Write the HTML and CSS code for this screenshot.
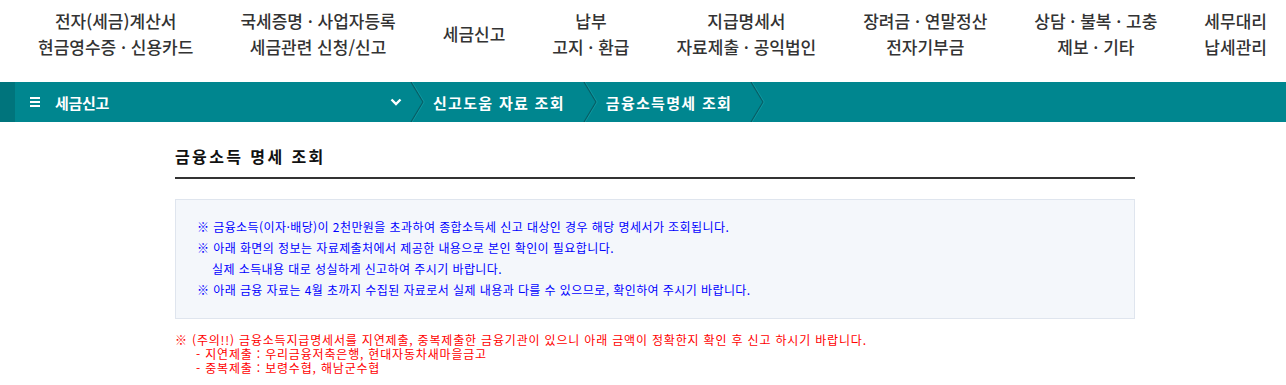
FILE: index.html
```html
<!DOCTYPE html>
<html lang="ko">
<head>
    <meta charset="UTF-8">
    <title>금융소득 명세 조회</title>
    <link rel="stylesheet" href="styles.css">
</head>
<body>

<!-- 상단 메뉴 -->
<ul class="gnb">
    <li><span>전자(세금)계산서</span><span>현금영수증 · 신용카드</span></li>
    <li><span>국세증명 · 사업자등록</span><span>세금관련 신청/신고</span></li>
    <li><span>세금신고</span></li>
    <li><span>납부</span><span>고지 · 환급</span></li>
    <li><span>지급명세서</span><span>자료제출 · 공익법인</span></li>
    <li><span>장려금 · 연말정산</span><span>전자기부금</span></li>
    <li><span>상담 · 불복 · 고충</span><span>제보 · 기타</span></li>
    <li><span>세무대리</span><span>납세관리</span></li>
</ul>

<!-- 경로 -->
<div class="location">
    <div class="loc-side"></div>
    <div class="loc-menu">
        <span class="burger"><i></i><i></i><i></i></span>
        <span class="loc-title">세금신고</span>
        <svg class="arrow-down" width="12" height="8" viewBox="0 0 12 8">
            <polyline points="1.5,1.5 6,6 10.5,1.5" fill="none" stroke="#fff" stroke-width="2.4"/>
        </svg>
    </div>
    <div class="loc-step">신고도움 자료 조회</div>
    <div class="loc-step">금융소득명세 조회</div>
    <div class="loc-step loc-last"></div>
</div>

<!-- 본문 -->
<div class="content">
    <h2 class="page-title">금융소득 명세 조회</h2>

    <div class="info-box">
        <p>※ 금융소득(이자·배당)이 2천만원을 초과하여 종합소득세 신고 대상인 경우 해당 명세서가 조회됩니다.</p>
        <p>※ 아래 화면의 정보는 자료제출처에서 제공한 내용으로 본인 확인이 필요합니다.</p>
        <p class="indent">실제 소득내용 대로 성실하게 신고하여 주시기 바랍니다.</p>
        <p>※ 아래 금융 자료는 4월 초까지 수집된 자료로서 실제 내용과 다를 수 있으므로, 확인하여 주시기 바랍니다.</p>
    </div>

    <div class="notice">
        <p>※ (주의!!) 금융소득지급명세서를 지연제출, 중복제출한 금융기관이 있으니 아래 금액이 정확한지 확인 후 신고 하시기 바랍니다.</p>
        <p class="sub">- 지연제출 : 우리금융저축은행, 현대자동차새마을금고</p>
        <p class="sub">- 중복제출 : 보령수협, 해남군수협</p>
    </div>
</div>

</body>
</html>
```

FILE: styles.css
```css
/* 기본 */
body {
    margin: 0;
    font-family: "Noto Sans CJK KR", "Noto Sans", sans-serif;
    color: #333;
    background: #fff;
}

p {
    margin: 0;
}

/* 상단 메뉴 */
.gnb {
    display: flex;
    gap: 47px;
    height: 82px;
    margin: 0;
    padding: 8px 0 0 38px;
    box-sizing: border-box;
    list-style: none;
    white-space: nowrap;
    overflow: hidden;
}

.gnb li {
    display: flex;
    flex-direction: column;
    justify-content: center;
    align-items: center;
    height: 52px;
    font-size: 17px;
    font-weight: 500;
    line-height: 26px;
    letter-spacing: 0;
    color: #333;
}

/* 경로 바 */
.location {
    display: flex;
    height: 40px;
    background: #00868f;
    color: #fff;
    font-size: 15px;
    font-weight: 700;
}

.loc-side {
    width: 15px;
    background: #00747c;
}

.loc-menu {
    display: flex;
    align-items: center;
    width: 395px;
    padding-left: 15px;
    box-sizing: border-box;
}

.burger {
    display: flex;
    flex-direction: column;
    gap: 2px;
    width: 10px;
    margin-right: 15px;
}

.burger i {
    display: block;
    height: 2px;
    background: #fff;
}

.loc-title {
    flex: 1;
    letter-spacing: -0.3px;
}

.arrow-down {
    margin-right: 8px;
}

.loc-step {
    display: flex;
    align-items: center;
    padding: 0 18px 0 23px;
    background: url("data:image/svg+xml,%3Csvg xmlns='http://www.w3.org/2000/svg' width='16' height='40'%3E%3Cpolyline points='1,0 13,20 1,40' fill='none' stroke='%23085f66' stroke-width='1.3'/%3E%3Cpolyline points='2.2,0 14.2,20 2.2,40' fill='none' stroke='%23139aa3' stroke-width='0.8'/%3E%3C/svg%3E") no-repeat left center;
    letter-spacing: 1.3px;
}

.loc-last {
    padding: 0 0 0 16px;
}

/* 본문 */
.content {
    width: 960px;
    margin-left: 175px;
}

.page-title {
    margin: 24px 0 0;
    padding-bottom: 11px;
    border-bottom: 2px solid #333;
    font-size: 16px;
    line-height: 20px;
    font-weight: 700;
    color: #111;
    letter-spacing: 2.4px;
}

.info-box {
    margin-top: 20px;
    padding: 16px 21px 18px;
    background: #f4f7fb;
    border: 1px solid #dfe5ee;
    font-size: 12px;
    line-height: 21px;
    color: #0000ff;
    letter-spacing: 0.42px;
}

.info-box .indent {
    padding-left: 15px;
}

.notice {
    margin-top: 14px;
    font-size: 12px;
    line-height: 14px;
    color: #ff0000;
    letter-spacing: 0.82px;
}

.notice .sub {
    padding-left: 21px;
}
```
